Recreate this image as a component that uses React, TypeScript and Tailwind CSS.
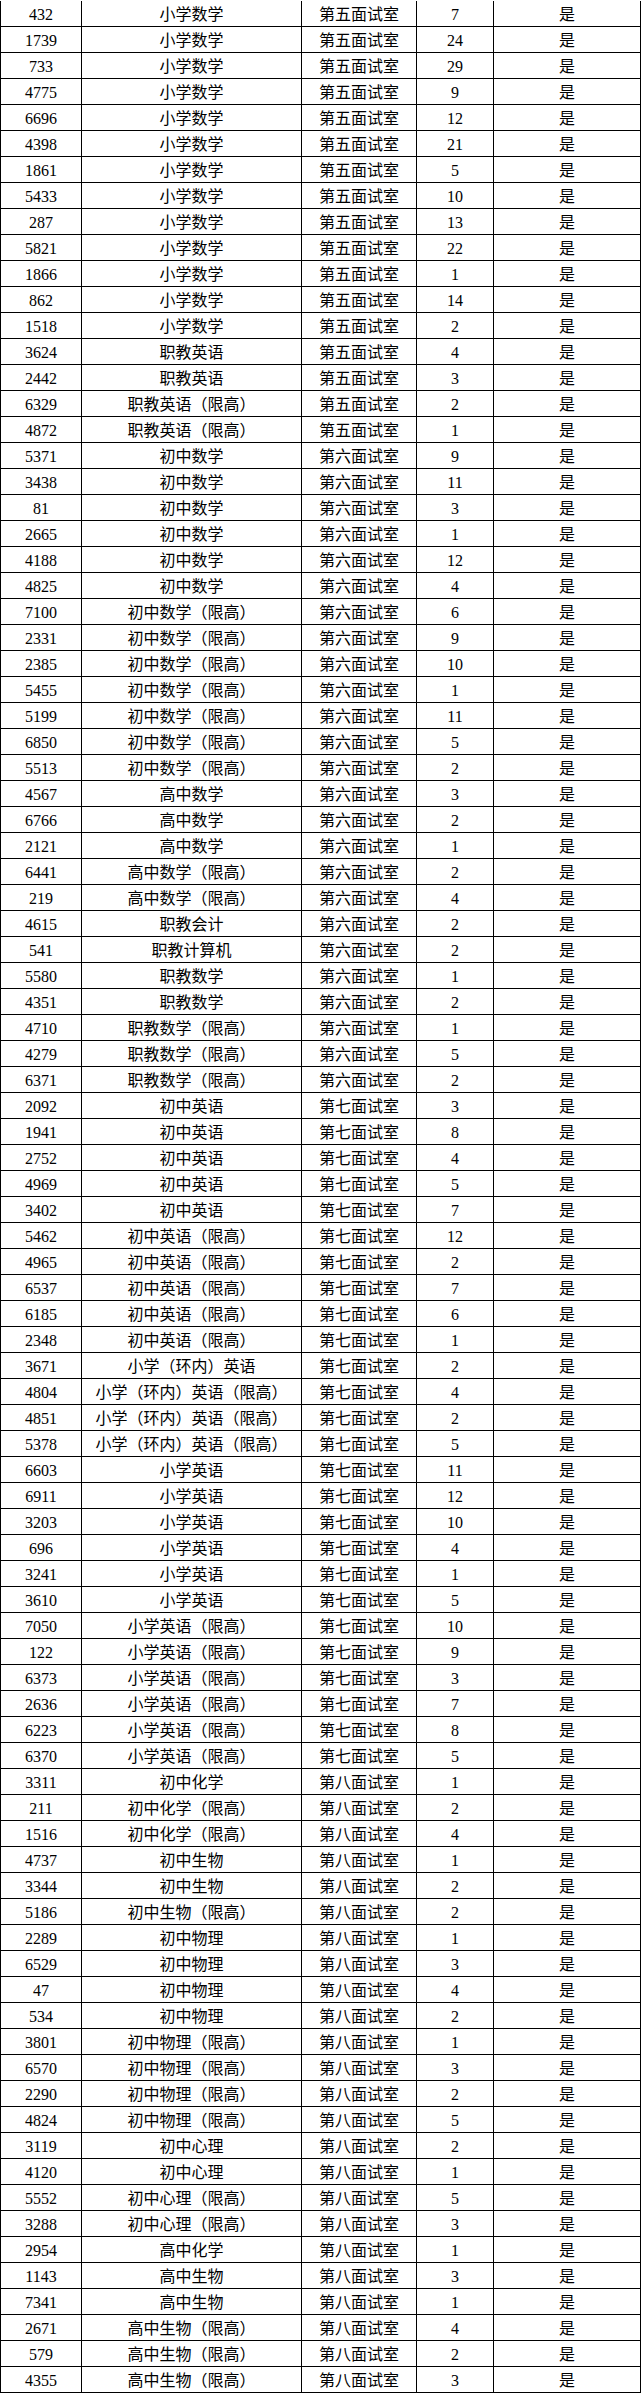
import React from "react";

const raw = `432|小学数学|第五面试室|7
1739|小学数学|第五面试室|24
733|小学数学|第五面试室|29
4775|小学数学|第五面试室|9
6696|小学数学|第五面试室|12
4398|小学数学|第五面试室|21
1861|小学数学|第五面试室|5
5433|小学数学|第五面试室|10
287|小学数学|第五面试室|13
5821|小学数学|第五面试室|22
1866|小学数学|第五面试室|1
862|小学数学|第五面试室|14
1518|小学数学|第五面试室|2
3624|职教英语|第五面试室|4
2442|职教英语|第五面试室|3
6329|职教英语（限高）|第五面试室|2
4872|职教英语（限高）|第五面试室|1
5371|初中数学|第六面试室|9
3438|初中数学|第六面试室|11
81|初中数学|第六面试室|3
2665|初中数学|第六面试室|1
4188|初中数学|第六面试室|12
4825|初中数学|第六面试室|4
7100|初中数学（限高）|第六面试室|6
2331|初中数学（限高）|第六面试室|9
2385|初中数学（限高）|第六面试室|10
5455|初中数学（限高）|第六面试室|1
5199|初中数学（限高）|第六面试室|11
6850|初中数学（限高）|第六面试室|5
5513|初中数学（限高）|第六面试室|2
4567|高中数学|第六面试室|3
6766|高中数学|第六面试室|2
2121|高中数学|第六面试室|1
6441|高中数学（限高）|第六面试室|2
219|高中数学（限高）|第六面试室|4
4615|职教会计|第六面试室|2
541|职教计算机|第六面试室|2
5580|职教数学|第六面试室|1
4351|职教数学|第六面试室|2
4710|职教数学（限高）|第六面试室|1
4279|职教数学（限高）|第六面试室|5
6371|职教数学（限高）|第六面试室|2
2092|初中英语|第七面试室|3
1941|初中英语|第七面试室|8
2752|初中英语|第七面试室|4
4969|初中英语|第七面试室|5
3402|初中英语|第七面试室|7
5462|初中英语（限高）|第七面试室|12
4965|初中英语（限高）|第七面试室|2
6537|初中英语（限高）|第七面试室|7
6185|初中英语（限高）|第七面试室|6
2348|初中英语（限高）|第七面试室|1
3671|小学（环内）英语|第七面试室|2
4804|小学（环内）英语（限高）|第七面试室|4
4851|小学（环内）英语（限高）|第七面试室|2
5378|小学（环内）英语（限高）|第七面试室|5
6603|小学英语|第七面试室|11
6911|小学英语|第七面试室|12
3203|小学英语|第七面试室|10
696|小学英语|第七面试室|4
3241|小学英语|第七面试室|1
3610|小学英语|第七面试室|5
7050|小学英语（限高）|第七面试室|10
122|小学英语（限高）|第七面试室|9
6373|小学英语（限高）|第七面试室|3
2636|小学英语（限高）|第七面试室|7
6223|小学英语（限高）|第七面试室|8
6370|小学英语（限高）|第七面试室|5
3311|初中化学|第八面试室|1
211|初中化学（限高）|第八面试室|2
1516|初中化学（限高）|第八面试室|4
4737|初中生物|第八面试室|1
3344|初中生物|第八面试室|2
5186|初中生物（限高）|第八面试室|2
2289|初中物理|第八面试室|1
6529|初中物理|第八面试室|3
47|初中物理|第八面试室|4
534|初中物理|第八面试室|2
3801|初中物理（限高）|第八面试室|1
6570|初中物理（限高）|第八面试室|3
2290|初中物理（限高）|第八面试室|2
4824|初中物理（限高）|第八面试室|5
3119|初中心理|第八面试室|2
4120|初中心理|第八面试室|1
5552|初中心理（限高）|第八面试室|5
3288|初中心理（限高）|第八面试室|3
2954|高中化学|第八面试室|1
1143|高中生物|第八面试室|3
7341|高中生物|第八面试室|1
2671|高中生物（限高）|第八面试室|4
579|高中生物（限高）|第八面试室|2
4355|高中生物（限高）|第八面试室|3`;

const rows = raw.split("\n").map((l) => l.split("|"));

export default function App() {
  return (
    <div
      className="w-[641px] bg-white text-black text-[16px] leading-none"
      style={{ fontFamily: '"Liberation Serif", "Noto Sans CJK SC", serif' }}
    >
      {rows.map((r, i) => (
        <div
          key={i}
          className={`flex box-border border-b border-black ${i === 0 ? "h-[27px] pt-[1px]" : "h-[26px]"}`}
        >
          <div className="w-[81px] shrink-0 border-l border-black flex items-center justify-center pt-[2px]">
            {r[0]}
          </div>
          <div className="w-[220px] shrink-0 border-l border-black flex items-center justify-center pt-[2px]">
            {r[1]}
          </div>
          <div className="w-[115px] shrink-0 border-l border-black flex items-center justify-center pt-[2px]">
            {r[2]}
          </div>
          <div className="w-[77px] shrink-0 border-l border-black flex items-center justify-center pt-[2px]">
            {r[3]}
          </div>
          <div className="w-[148px] shrink-0 border-l border-r border-black flex items-center justify-center pt-[2px]">
            是
          </div>
        </div>
      ))}
    </div>
  );
}
